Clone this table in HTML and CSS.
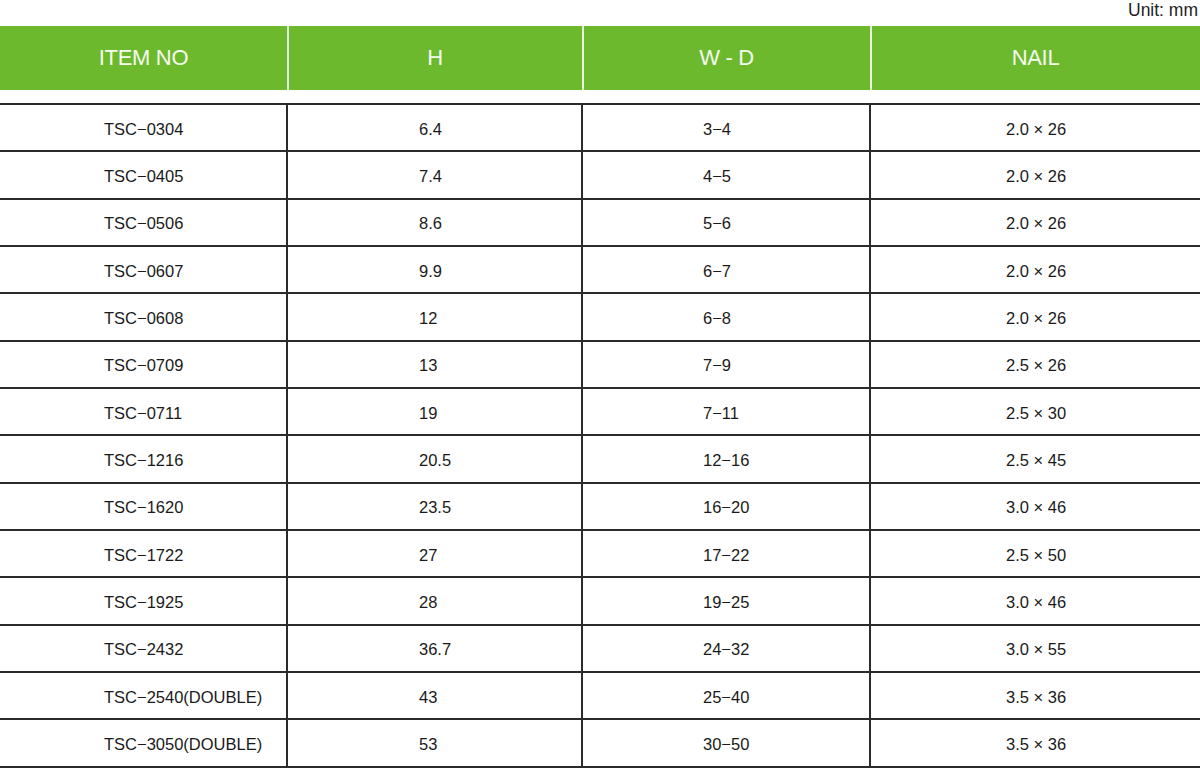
FILE: index.html
```html
<!DOCTYPE html>
<html lang="en">
<head>
<meta charset="utf-8">
<title>TSC Cable Clips</title>
<link rel="stylesheet" href="styles.css">
</head>
<body>
<div class="page">
  <div class="unit">Unit: mm</div>
  <div class="head">
    <div class="hcell">ITEM NO</div>
    <div class="hcell">H</div>
    <div class="hcell">W - D</div>
    <div class="hcell">NAIL</div>
  </div>
  <div class="body">
    <div class="row"><div class="c c1">TSC−0304</div><div class="c c2">6.4</div><div class="c c3">3−4</div><div class="c c4">2.0 × 26</div></div>
    <div class="row"><div class="c c1">TSC−0405</div><div class="c c2">7.4</div><div class="c c3">4−5</div><div class="c c4">2.0 × 26</div></div>
    <div class="row"><div class="c c1">TSC−0506</div><div class="c c2">8.6</div><div class="c c3">5−6</div><div class="c c4">2.0 × 26</div></div>
    <div class="row"><div class="c c1">TSC−0607</div><div class="c c2">9.9</div><div class="c c3">6−7</div><div class="c c4">2.0 × 26</div></div>
    <div class="row"><div class="c c1">TSC−0608</div><div class="c c2">12</div><div class="c c3">6−8</div><div class="c c4">2.0 × 26</div></div>
    <div class="row"><div class="c c1">TSC−0709</div><div class="c c2">13</div><div class="c c3">7−9</div><div class="c c4">2.5 × 26</div></div>
    <div class="row"><div class="c c1">TSC−0711</div><div class="c c2">19</div><div class="c c3">7−11</div><div class="c c4">2.5 × 30</div></div>
    <div class="row"><div class="c c1">TSC−1216</div><div class="c c2">20.5</div><div class="c c3">12−16</div><div class="c c4">2.5 × 45</div></div>
    <div class="row"><div class="c c1">TSC−1620</div><div class="c c2">23.5</div><div class="c c3">16−20</div><div class="c c4">3.0 × 46</div></div>
    <div class="row"><div class="c c1">TSC−1722</div><div class="c c2">27</div><div class="c c3">17−22</div><div class="c c4">2.5 × 50</div></div>
    <div class="row"><div class="c c1">TSC−1925</div><div class="c c2">28</div><div class="c c3">19−25</div><div class="c c4">3.0 × 46</div></div>
    <div class="row"><div class="c c1">TSC−2432</div><div class="c c2">36.7</div><div class="c c3">24−32</div><div class="c c4">3.0 × 55</div></div>
    <div class="row"><div class="c c1">TSC−2540(DOUBLE)</div><div class="c c2">43</div><div class="c c3">25−40</div><div class="c c4">3.5 × 36</div></div>
    <div class="row"><div class="c c1">TSC−3050(DOUBLE)</div><div class="c c2">53</div><div class="c c3">30−50</div><div class="c c4">3.5 × 36</div></div>
  </div>
</div>
</body>
</html>
```

FILE: styles.css
```css
html, body {
  margin: 0;
  padding: 0;
  background: #ffffff;
}

.page {
  width: 1200px;
  font-family: "Liberation Sans", Arial, sans-serif;
  color: #1a1a1a;
}

.unit {
  height: 26px;
  box-sizing: border-box;
  text-align: right;
  padding-top: 1px;
  padding-right: 2px;
  font-size: 17.5px;
  line-height: 18px;
  color: #222;
}

.head {
  display: grid;
  grid-template-columns: 288px 295px 288px 1fr;
  height: 64px;
  background: #6db92e;
}

.hcell {
  display: flex;
  align-items: center;
  justify-content: center;
  font-size: 22px;
  letter-spacing: -0.3px;
  color: #f5fbef;
  border-right: 2px solid #e8f3de;
  margin-right: -1px;
}

.hcell:last-child {
  border-right: none;
  margin-right: 0;
}

.body {
  margin-top: 13px;
  border-top: 2px solid #2b2b2b;
}

.row {
  display: grid;
  grid-template-columns: 288px 295px 288px 1fr;
  height: 47.33px;
  box-sizing: border-box;
  border-bottom: 2px solid #2b2b2b;
}

.c {
  display: flex;
  align-items: center;
  padding-top: 3px;
  box-sizing: border-box;
  font-size: 16.5px;
  border-right: 2px solid #2b2b2b;
}

.c4 {
  border-right: none;
}

.c1 { padding-left: 104px; }
.c2 { padding-left: 131px; }
.c3 { padding-left: 120px; }
.c4 { padding-left: 135px; }
```
